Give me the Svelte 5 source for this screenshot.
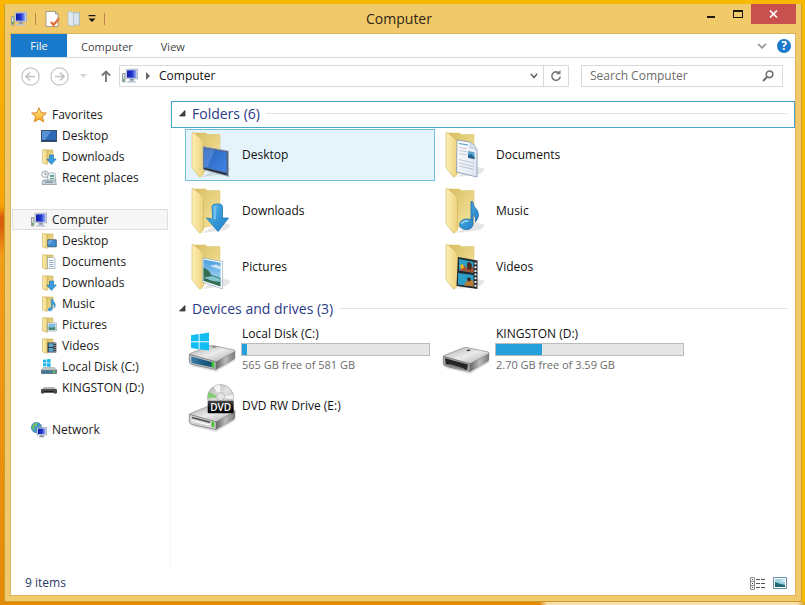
<script>
  const favorites = [
    { name: 'Desktop', icon: 'screen' },
    { name: 'Downloads', icon: 'downloads' },
    { name: 'Recent places', icon: 'recent' }
  ];
  const places = [
    { name: 'Desktop', icon: 'desktop' },
    { name: 'Documents', icon: 'documents' },
    { name: 'Downloads', icon: 'downloads' },
    { name: 'Music', icon: 'music' },
    { name: 'Pictures', icon: 'pictures' },
    { name: 'Videos', icon: 'videos' },
    { name: 'Local Disk (C:)', icon: 'system' },
    { name: 'KINGSTON (D:)', icon: 'usb' }
  ];
  const folders = [
    { name: 'Desktop', icon: 'desktop' },
    { name: 'Documents', icon: 'documents' },
    { name: 'Downloads', icon: 'downloads' },
    { name: 'Music', icon: 'music' },
    { name: 'Pictures', icon: 'pictures' },
    { name: 'Videos', icon: 'videos' }
  ];
  const drives = [
    { name: 'Local Disk (C:)', icon: 'system', free: '565', total: '581' },
    { name: 'KINGSTON (D:)', icon: 'usb', free: '2.70', total: '3.59' },
    { name: 'DVD RW Drive (E:)', icon: 'dvd' }
  ];
  let selected = $state('Desktop');
  let query = $state('');
  const used = (d) => Math.round((1 - Number(d.free) / Number(d.total)) * 1000) / 10;
</script>

{#snippet computerIcon()}
  <svg class="i16" viewBox="0 0 16 16" aria-hidden="true">
    <path d="M0.5 5.5h2.4v8.5H0.5z" fill="#d5dcda" stroke="#77817f" stroke-width=".7" />
    <path d="M1 11h1.5v2H1z" fill="#54a556" />
    <path d="M4 1.5 15.5 1v10L4 10.5z" fill="#dfe4ee" stroke="#8d98ac" stroke-width=".6" />
    <path d="M5 2.5 14.5 2v8L5 9.5z" fill="url(#blueScreen)" />
    <path d="M8 10.8h3.5l.6 2H7.5z" fill="#8795ad" />
    <path d="M5.5 13h8l1 1.4H4.8z" fill="#bac3d2" />
  </svg>
{/snippet}

{#snippet smallIcon(kind)}
  <svg class="i16" viewBox="0 0 16 16" aria-hidden="true">
    {#if kind === 'screen'}
      <rect x=".5" y="2.5" width="15" height="11" fill="#2f69b8" stroke="#39506f" />
      <path d="M1 3h9L4 12H1z" fill="#6aa3df" opacity=".7" />
      <path d="M1 12h14v1H1z" fill="#253e63" />
    {:else if kind === 'recent'}
      <path d="M7 3h7l1 8H6z" fill="#e9f1f3" stroke="#92a4ac" stroke-width=".7" />
      <path d="M9 5h4v2H9zM9 8h4.5v1H9z" fill="#5fa48e" />
      <path d="M2 10h12l1.5 4.5H1z" fill="#c8d2d8" stroke="#7c8b94" stroke-width=".7" />
      <path d="M4 12h8" stroke="#5f7884" />
      <circle cx="4" cy="4.2" r="3.3" fill="#f2f4f6" stroke="#8e999f" stroke-width=".8" />
      <path d="M4 2.3v2h1.8" fill="none" stroke="#55626a" stroke-width=".7" />
    {:else if kind === 'system'}
      <path d="M2 .8 5.3.4v3.2H2zM5.9.3 9.6 0v3.6H5.9zM2 4.2h3.3v3.2L2 7zM5.9 4.2h3.7v3.7l-3.7-.5z" fill="#1fb6ea" />
      <path d="M2.5 8.5h11L16 11H0z" fill="#c4cacd" stroke="#92999d" stroke-width=".5" />
      <path d="M0 11h16v3.2q0 .8-1 .8H1q-1 0-1-.8z" fill="#6d7b83" />
      <path d="M1.5 12h9v2h-9z" fill="#347c9f" />
      <path d="M12 12h2v2h-2z" fill="#4ed05a" />
    {:else if kind === 'usb'}
      <path d="M3 7h10l3 3H0z" fill="#b5b5b5" />
      <path d="M0 10q0-1 1-1h14q1 0 1 1v3l-2 1-1.500-1.500h-9L2 14l-2-1z" fill="#4a4a4a" />
      <path d="M3 11h10v1.500H3z" fill="#1f1f1f" />
    {:else}
      <path d="M5 1h7v12H5z" fill="url(#folderBack)" stroke="#c9ad56" stroke-width=".6" />
      <path d="M1.500 .8H5l1.200 1.700v12.900L1.500 13.800z" fill="url(#folderFront)" stroke="#c8a94f" stroke-width=".6" />
      {#if kind === 'desktop'}
        <path d="M6.800 6.800h8.500v7H6.800z" fill="#3f8ad0" stroke="#37506e" stroke-width=".8" />
        <path d="M7.200 7.200h5l-5 5z" fill="#86bdeb" opacity=".7" />
      {:else if kind === 'documents'}
        <path d="M6.500 3.500h6l1.500 1.700V14.500H6.500z" fill="#fafcff" stroke="#8fa2b5" stroke-width=".7" />
        <path d="M8 6.500h4.500M8 8.500h4.500M8 10.500h4.500M8 12.500h4.500" stroke="#7f9ec0" stroke-width=".8" />
      {:else if kind === 'downloads'}
        <path d="M8.500 6h4v4h2.700l-4.700 5.500L5.800 10h2.700z" fill="#3d9ddd" stroke="#1d6faf" stroke-width=".6" />
      {:else if kind === 'music'}
        <path d="M10.200 3h1.200q.4 2.200 2.300 3.800 1.600 2.200-.2 5.200.3-3.300-2.100-4.300v5.100q-.4 2.200-2.900 2.300-2-.4-1.300-2.200 1-1.700 3-1.100z" fill="#3d9ddd" stroke="#1c70b2" stroke-width=".4" />
      {:else if kind === 'pictures'}
        <path d="M6.500 6h8.800v8H6.500z" fill="#fff" stroke="#8293a2" stroke-width=".7" />
        <path d="M7.500 7h6.800v3.500H7.500z" fill="#77bae5" />
        <path d="m7.500 10 3 .6 3.800-.6v3H7.500z" fill="#438570" />
      {:else if kind === 'videos'}
        <path d="M6.500 4.500h8.800v10H6.500z" fill="#303942" />
        <path d="M7.700 5.300h4.800v3.800H7.700zM7.700 10h4.800v3.700H7.700z" fill="#5aa6c8" />
        <path d="M14 5v9" stroke="#e5e8ea" stroke-dasharray="1 1" />
      {/if}
    {/if}
  </svg>
{/snippet}

{#snippet driveBody(front)}
  <path d="M4 40 29 46 49 34 46 32z" fill="#000" opacity=".12" />
  <path d="M2.500 28.500Q3 27.200 5 26.700L22 20q2-.8 4-.4l20.500 4.200q2 .5 1.500 2L29 36z" fill="url(#driveTop)" stroke="#8c8c8c" stroke-width=".7" />
  <path d="M29 36 48 25.500v6q0 1.200-1.500 2L29 43.500z" fill="url(#driveSide)" stroke="#777" stroke-width=".4" />
  <path d="M2.300 28.300 29 35.800v7.700L5 38.500q-2.700-.8-2.700-3z" fill={front} stroke="#6f6f6f" stroke-width=".7" />
{/snippet}

{#snippet largeIcon(kind)}
  <svg class="i48" viewBox="0 0 48 48" aria-hidden="true">
    {#if kind === 'system'}
      {@render driveBody('#b9bfc2')}
      <path d="M4.300 30.600 26.500 36.600v5L6 37.300q-1.700-.6-1.700-2z" fill="url(#driveBlue)" />
      <path d="M24.500 35.800 27.300 36.600v5L24.500 41z" fill="#35c52c" />
      <path d="m24 21 4-1.200 3 .8-4 1.400z" fill="#8b8b8b" />
      <path d="m4 9.200 7.700-1.100v7.200H4zM12.600 8 22 6.600v8.700h-9.400zM4 16.200h7.700v7L4 22.100zM12.600 16.200H22v8.400l-9.400-1.300z" fill="#12bdf2" />
    {:else if kind === 'usb'}
      <g transform="translate(0 2)">
        {@render driveBody('#a5a5a5')}
        <path d="M4 30.200 27 36.500 26 42 20 40.300 9.500 36.500 4.800 36.500z" fill="#252525" />
        <path d="m10 36.500 12 3.500 3 2-18.500-4.200z" fill="#777" />
        <path d="m25 22.500 2.500-1 2.500.6-2.500 1.200z" fill="#333" />
      </g>
    {:else if kind === 'dvd'}
      <g transform="translate(0 4)">
        {@render driveBody('#d4d4d4')}
        <path d="m5 31.500 18 4.700" stroke="#4b4b4b" stroke-width="1.500" />
        <path d="m5 34.500 18 4.600" stroke="#fff" stroke-width="1.200" />
        <path d="M24.500 35.500 27.300 36.300v5L24.500 40.600z" fill="#45c52f" />
      </g>
      <circle cx="33.500" cy="15.500" r="13" fill="url(#disc)" stroke="#969696" stroke-width=".6" />
      <path d="M33.500 15.500 22 10q-1.500 3-1.200 6z" fill="#6fd05d" opacity=".8" />
      <path d="m33.500 15.500-7-10.800q3-2 6.500-2z" fill="#fff" opacity=".8" />
      <path d="m33.500 15.500 12.500-3q.7 2.500.3 5z" fill="#fff" opacity=".7" />
      <circle cx="33.500" cy="14.500" r="4" fill="#eee" stroke="#b5b5b5" />
      <circle cx="33.500" cy="14.500" r="1.700" fill="#fff" stroke="#aaa" stroke-width=".6" />
      <rect x="20.700" y="18.700" width="26" height="12.500" rx="1" fill="url(#dvdLabel)" />
      <text x="33.700" y="28.500" text-anchor="middle" class="disc-text">DVD</text>
    {:else}
      <path d="m15 46 24-3 5-5-10-3z" fill="#000" opacity=".1" />
      <path d="M5.500 2h13l2 1.500H33V37L15 41z" fill="url(#folderBack)" stroke="#dcc36e" stroke-width=".5" />
      <path d="M5 2q1-.8 2 0l8 6.500q1.500 1 1.500 3V43l-3 3q-.7.300-1.300-.2L5.700 37.500Q5 37 5 36z" fill="url(#folderFront)" stroke="#d0b25a" stroke-width=".6" />
      {#if kind === 'desktop'}
        <path d="M16 15.500 41.500 20v25.500L16 38.500z" fill="#50617c" stroke="#aab5c4" stroke-width=".8" />
        <path d="M17 17 39.500 21v20.500L17 36z" fill="url(#blueDesk)" />
        <path d="M17 17 28 19 20 36.700 17 36z" fill="#8dbbf4" opacity=".3" />
        <path d="m17 37 22.500 5.600v1.200L17 38z" fill="#17212f" />
      {:else if kind === 'documents'}
        <path d="m16 9 13 2q5 2.500 7 8v27l-20.500-5z" fill="url(#paper)" stroke="#7d93b3" stroke-width=".8" />
        <path d="M29 11q1.500 4-.5 6 4-.5 7.500 2" fill="#d6e3f2" stroke="#9fb3cd" stroke-width=".6" />
        <path d="m18 12.500 9 1.500" stroke="#519bca" stroke-width="1.200" />
        <path d="m18 16.500 8 1.300m-8 1.700 8 1.300m-8 1.700 8 1.300m-8 4.700 15 3.500m-15 0 15 3.500m-15-.5 15 3.500" stroke="#b3bccb" stroke-width=".8" />
        <path d="m27 20 6.500 1.200v7L27 26.800z" fill="#5ba3cf" />
        <path d="m27 24 3-1 3.500 3v2.200L27 26.800z" fill="#29648f" />
      {:else if kind === 'downloads'}
        <path d="M25 19.500q.5-2.500 4-2.500h3q3.500 0 3.500 3V31h6L31 44.500 19.500 31 25.700 32z" fill="url(#blueArrow)" stroke="#1d78ba" stroke-width=".8" />
        <path d="M26.500 20q.5-1.500 3-1.500l-.5 14-5.500-.5 3-.5z" fill="#8fd2f5" opacity=".6" />
      {:else if kind === 'music'}
        <path d="M30 14.500h1.500Q32.500 20 36 23q3.500 5.500-1.500 12 .5-6-2.500-8v10q-.5 5.500-7 5.500-6-.5-6.500-5 1-5.500 8-5.500 2 0 3.500.8z" fill="url(#blueArrow)" stroke="#206ca7" stroke-width=".8" />
        <path d="M20.500 37q2-3.500 7-3" stroke="#b4e1f8" stroke-width="1.200" fill="none" />
      {:else if kind === 'pictures'}
        <path d="M16 15 35.500 18.500V46L15.500 39z" fill="#fff" stroke="#93acc3" stroke-width=".7" />
        <path d="m16.500 16.500 17 3.200v23.800l-17-5.800z" fill="url(#sky)" />
        <path d="m16.500 24.500 5 3 3 4.500 9 3v8.500l-17-5.800z" fill="#356f51" />
        <path d="m16.500 34.500 9-1.500 8 3v3l-8-1z" fill="#7fc4cf" />
        <path d="m23 23 6-1.500 4.500 2v3z" fill="#e6f4fc" opacity=".8" />
      {:else if kind === 'videos'}
        <path d="M17 14 36.500 17.500V46L15.500 43z" fill="#24292f" />
        <path d="m18 16 14.500 2.800v11L18 27.500zM17 30l15.500 2v11.500L17 41.500z" fill="#2b9fc8" />
        <path d="m19 26 4-4 3 4 3-4 3.500 3v4.800L19 27.500z" fill="#a94f2c" />
        <path d="m26 20 3-1 2 3-1 5-4-1z" fill="#4b2e24" />
        <path d="m19 22 3-1 1 4-3 1z" fill="#eab62e" />
        <path d="m25 39 3-3 4.500 2v5.500L23 42.300z" fill="#b97930" />
        <path d="m26 35 3-.5 1 3-3 1z" fill="#30251f" />
        <path d="M34.500 19.500V45" stroke="#f0f0ee" stroke-width="2" stroke-dasharray="2 1.700" />
      {/if}
    {/if}
  </svg>
{/snippet}

<svg class="defs" aria-hidden="true">
  <defs>
    <linearGradient id="blueScreen"><stop offset="0" stop-color="#0d1ca6" /><stop offset=".55" stop-color="#2438d0" /><stop offset="1" stop-color="#a2b6f4" /></linearGradient>
    <linearGradient id="blueDesk" x1="0" y1="0" x2="1" y2="1"><stop offset="0" stop-color="#295fb4" /><stop offset="1" stop-color="#3f87ea" /></linearGradient>
    <linearGradient id="folderFront"><stop offset="0" stop-color="#fdf0b4" /><stop offset="1" stop-color="#ecd27c" /></linearGradient>
    <linearGradient id="folderBack" x1="0" y1="0" x2="1" y2="1"><stop offset="0" stop-color="#d8bd60" /><stop offset="1" stop-color="#f7e7a1" /></linearGradient>
    <linearGradient id="paper" x1="0" y1="0" x2="1" y2="1"><stop offset="0" stop-color="#fff" /><stop offset="1" stop-color="#dde3ef" /></linearGradient>
    <linearGradient id="sky" x1="0" y1="0" x2="0" y2="1"><stop offset="0" stop-color="#4a9fe0" /><stop offset="1" stop-color="#b9e2f5" /></linearGradient>
    <linearGradient id="blueArrow" x1="0" y1="0" x2="1" y2="1"><stop offset="0" stop-color="#55b7ec" /><stop offset="1" stop-color="#1b7bc4" /></linearGradient>
    <linearGradient id="driveTop" x1="0" y1="0" x2="1" y2="1"><stop offset="0" stop-color="#a9a9a9" /><stop offset=".5" stop-color="#ebebeb" /><stop offset="1" stop-color="#a6a6a6" /></linearGradient>
    <linearGradient id="driveSide"><stop offset="0" stop-color="#666" /><stop offset=".5" stop-color="#bababa" /><stop offset="1" stop-color="#7b7b7b" /></linearGradient>
    <linearGradient id="driveBlue"><stop offset="0" stop-color="#3b7ea4" /><stop offset=".5" stop-color="#1d5f8a" /><stop offset="1" stop-color="#174a66" /></linearGradient>
    <linearGradient id="disc" x1="0" y1="0" x2="1" y2="1"><stop offset="0" stop-color="#b4b4b4" /><stop offset=".5" stop-color="#e3e3e3" /><stop offset="1" stop-color="#a0a0a0" /></linearGradient>
    <linearGradient id="dvdLabel" x1="0" y1="0" x2="0" y2="1"><stop offset="0" stop-color="#4a4a4a" /><stop offset=".5" stop-color="#161616" /><stop offset="1" stop-color="#000" /></linearGradient>
    <linearGradient id="gold" x1="0" y1="0" x2="0" y2="1"><stop offset="0" stop-color="#fff08a" /><stop offset="1" stop-color="#f5a51d" /></linearGradient>
  </defs>
</svg>

<div class="wallpaper">
  <div class="window">
    <header class="titlebar">
      <div class="quick">
        {@render computerIcon()}
        <span class="rule"></span>
        <button aria-label="Properties">
          <svg class="i16" viewBox="0 0 16 16">
            <path d="M2 .5h9.500L14 3v12.500H2z" fill="#fff" stroke="#8f8a80" stroke-width=".8" />
            <path d="M11.500.5V3H14" fill="none" stroke="#8f8a80" stroke-width=".8" />
            <path d="m7 11 2.500 3L15 7.500" fill="none" stroke="#e36e3a" stroke-width="2.400" />
          </svg>
        </button>
        <button aria-label="New folder">
          <svg class="i16" viewBox="0 0 16 16">
            <path d="M5 1.500h8.500v12.500H5z" fill="#c5d5df" stroke="#9db0bc" stroke-width=".6" />
            <path d="M2 .8h4L7.500 2.500v13L2 14z" fill="#dfe9f0" stroke="#a5b9c6" stroke-width=".6" />
            <path d="M8 3h4.500v10.500H8z" fill="#dce8ef" opacity=".8" />
          </svg>
        </button>
        <button aria-label="Customize Quick Access Toolbar" class="narrow">
          <svg width="8" height="8" viewBox="0 0 8 8"><path d="M.5 0h7v1.300h-7zM.500 3.500h7L4 7z" fill="#161616" /></svg>
        </button>
        <span class="rule"></span>
      </div>
      <h1>Computer</h1>
      <div class="caption">
        <button aria-label="Minimize"><svg width="8" height="10" viewBox="0 0 8 10"><path d="M0 7h8v2H0z" fill="#1d1a10" /></svg></button>
        <button aria-label="Maximize"><svg width="10" height="8" viewBox="0 0 10 8"><path d="M0 0h10v8H0zM1 2v5h8V2z" fill="#1d1a10" fill-rule="evenodd" /></svg></button>
        <button aria-label="Close" class="close"><svg width="9" height="8" viewBox="0 0 9 8"><path d="m1 .5 7 7m0-7-7 7" stroke="#fff" stroke-width="1.700" /></svg></button>
      </div>
    </header>

    <div class="client">
      <div class="ribbon">
        <button class="file">File</button>
        <button class="tab">Computer</button>
        <button class="tab">View</button>
        <button class="expand" aria-label="Expand the Ribbon"><svg width="10" height="6" viewBox="0 0 10 6"><path d="m1 .8 4 4 4-4" fill="none" stroke="#9a9a9a" stroke-width="1.800" /></svg></button>
        <button class="help" aria-label="Help">?</button>
      </div>

      <div class="toolbar">
        <button aria-label="Back"><svg width="19" height="19" viewBox="0 0 19 19" fill="none" stroke="#c3c3c3"><circle cx="9.500" cy="9.500" r="8.700" stroke-width="1.200" /><path d="M14 9.500H5.500M9 5.500l-4 4 4 4" stroke-width="1.700" /></svg></button>
        <button aria-label="Forward"><svg width="19" height="19" viewBox="0 0 19 19" fill="none" stroke="#c3c3c3"><circle cx="9.500" cy="9.500" r="8.700" stroke-width="1.200" /><path d="M5 9.500h8.500M10 5.500l4 4-4 4" stroke-width="1.700" /></svg></button>
        <button aria-label="Recent locations" class="hist"><svg width="7" height="4" viewBox="0 0 7 4"><path d="M0 0h7L3.500 4z" fill="#d3d3d3" /></svg></button>
        <button aria-label="Up" class="up"><svg width="10" height="12" viewBox="0 0 10 12"><path d="M5 12V1.500M1 5.500l4-4 4 4" fill="none" stroke="#757575" stroke-width="1.800" /></svg></button>
        <div class="address">
          {@render computerIcon()}
          <svg width="4" height="8" viewBox="0 0 4 8" class="crumb"><path d="M0 0v8l4-4z" fill="#666" /></svg>
          <a href="#computer">Computer</a>
          <button aria-label="Previous locations"><svg width="8" height="6" viewBox="0 0 8 6"><path d="m.8.800 3.200 3.700L7.200.8" fill="none" stroke="#666" stroke-width="1.600" /></svg></button>
          <button aria-label="Refresh" class="refresh"><svg width="12" height="12" viewBox="0 0 12 12"><path d="M9.300 3.500A4.200 4.200 0 1 0 10.200 6.500" fill="none" stroke="#777" stroke-width="1.600" /><path d="M6 4.200h4.500V0z" fill="#777" /></svg></button>
        </div>
        <label class="search">
          <input type="text" placeholder="Search Computer" aria-label="Search Computer" bind:value={query} />
          <svg width="12" height="12" viewBox="0 0 12 12"><circle cx="7.500" cy="4.300" r="3.300" fill="none" stroke="#707070" stroke-width="1.600" /><path d="M5.200 6.800 1 11" stroke="#707070" stroke-width="2" /></svg>
        </label>
      </div>

      <div class="body">
        <nav>
          <a class="root" href="#favorites">
            <svg class="i16" viewBox="0 0 16 16" aria-hidden="true"><path d="m8 .8 2.100 4.900 5.300.4-4.100 3.500 1.400 5.300L8 12l-4.700 2.900 1.400-5.300L.6 6.100l5.300-.4z" fill="url(#gold)" stroke="#d27a20" stroke-width=".9" /></svg>
            Favorites
          </a>
          {#each favorites as f}
            <a class="leaf" href="#{f.icon}">{@render smallIcon(f.icon)}{f.name}</a>
          {/each}
          <a class="root current" href="#computer">{@render computerIcon()}Computer</a>
          {#each places as p}
            <a class="leaf" href="#{p.icon}">{@render smallIcon(p.icon)}{p.name}</a>
          {/each}
          <a class="root spaced" href="#network">
            <svg class="i16" viewBox="0 0 16 16" aria-hidden="true">
              <circle cx="5.500" cy="5.500" r="5.200" fill="#3d95cf" stroke="#276b9d" stroke-width=".5" />
              <path d="M2 2.500Q5 0 7 1L5.500 4 3 5l1 3-1.500.5Q0 6 2 2.500zM7 5l3-1-.5 4-2 1z" fill="#6fc069" />
              <path d="M6 5.500h9.500v7.500H6z" fill="#dbe3ee" stroke="#7f8fa5" stroke-width=".6" />
              <path d="M7 6.500h7.500v5.500H7z" fill="url(#blueScreen)" />
              <path d="M9.500 13h2.500l1.500 2.300H8z" fill="#8896ac" />
            </svg>
            Network
          </a>
        </nav>

        <main>
          <section>
            <h2 class="focused"><svg width="7" height="7" viewBox="0 0 7 7"><path d="M6 .5V6H.5z" fill="#444" stroke="#222" stroke-width=".7" /></svg>Folders (6)</h2>
            <div class="tiles">
              {#each folders as f}
                <button class="tile" class:selected={selected === f.name} onclick={() => (selected = f.name)}>
                  {@render largeIcon(f.icon)}
                  <span class="info">{f.name}</span>
                </button>
              {/each}
            </div>
          </section>
          <section>
            <h2><svg width="7" height="7" viewBox="0 0 7 7"><path d="M6 .5V6H.5z" fill="#444" stroke="#222" stroke-width=".7" /></svg>Devices and drives (3)</h2>
            <div class="tiles">
              {#each drives as d}
                <button class="tile" class:selected={selected === d.name} onclick={() => (selected = d.name)}>
                  {@render largeIcon(d.icon)}
                  <span class="info">
                    <span>{d.name}</span>
                    {#if d.free}
                      <span class="bar"><span class="fill" style="width: {used(d)}%"></span></span>
                      <span class="free">{d.free} GB free of {d.total} GB</span>
                    {/if}
                  </span>
                </button>
              {/each}
            </div>
          </section>
        </main>
      </div>

      <footer>
        <span>9 items</span>
        <div class="views">
          <button aria-label="Details view">
            <svg width="15" height="13" viewBox="0 0 15 13"><path d="M.5.5h4v12h-4zM.5 4.500h4M.5 8.500h4" fill="#fff" stroke="#8b8b8b" /><path d="M2 2h1v1H2zM2 6h1v1H2zM2 10h1v1H2z" fill="#333" /><path d="M6 2.500h9M6 6.500h9M6 10.500h9" stroke="#555" stroke-dasharray="4 1" /></svg>
          </button>
          <button aria-label="Large icons view">
            <svg width="14" height="12" viewBox="0 0 14 12"><path d="M.5.5h13v11H.5z" fill="#fff" stroke="#6d8ca6" /><path d="M2 2h10v8H2z" fill="#9ed3e4" /><path d="m2 5 4 1.500L12 8v2H2z" fill="#1f6876" /><path d="M7 3h5v2.500z" fill="#e4f5fa" /></svg>
          </button>
        </div>
      </footer>
    </div>
  </div>
</div>

<style>
  :global(body) { margin: 0; }
  .defs { position: absolute; width: 0; height: 0; }
  .wallpaper {
    box-sizing: border-box;
    min-height: 100vh;
    padding: 4px 3px 3px 4px;
    display: flex;
    background:
      linear-gradient(90deg, #e48a07 0 67%, #f8dfae 68% 99%, #d8a01a) bottom / 100% 3px no-repeat,
      linear-gradient(#f9b500, #f7a504 34%, #d65a0c 36%, #dc680c 38%, #f29d18 42%, #e48a07) left / 4px 100% no-repeat,
      #f8ba00;
    font-family: "Open Sans", "Noto Sans", sans-serif;
    font-size: 12px;
    line-height: 16px;
    color: #1a1a1a;
  }
  .window {
    flex: 1;
    display: flex;
    flex-direction: column;
    box-sizing: border-box;
    border: 1px solid #cd9a2c;
    border-top: 0;
    padding: 0 6px 6px;
    background: #f0c96a;
  }
  button, input { font: inherit; color: inherit; border: 0; padding: 0; background: none; }
  button { display: inline-flex; align-items: center; justify-content: center; }
  a { color: inherit; text-decoration: none; }
  svg { flex: none; display: block; }
  .i16 { width: 16px; height: 16px; }
  .i48 { width: 48px; height: 48px; overflow: visible; }
  .disc-text { font: 600 10px "Open Sans", sans-serif; fill: #fff; }

  .titlebar { display: grid; grid-template-columns: 1fr auto 1fr; height: 30px; }
  .quick { display: flex; align-items: center; gap: 6px; }
  .quick .rule { width: 1px; height: 12px; background: #bf8351; margin: 0 2px; }
  .quick .narrow { width: 8px; }
  h1 { margin: 0 8px 0 0; font-size: 14px; font-weight: 400; line-height: 30px; color: #2d2615; }
  .caption { display: flex; justify-content: flex-end; align-items: flex-start; margin-right: -1px; }
  .caption button { width: 27px; height: 20px; }
  .caption .close { width: 45px; background: #c8504f; }

  .client { flex: 1; display: flex; flex-direction: column; background: #fff; box-shadow: 0 0 0 1px #dcb35c; }
  .ribbon { display: flex; align-items: stretch; height: 23px; border-bottom: 1px solid #dadbdc; color: #444; font-size: 11px; }
  .file { width: 56px; background: #1979ca; color: #fff; }
  .tab { padding: 2px 14px 0; }
  .expand { width: 20px; margin-left: auto; }
  .help {
    align-self: center;
    width: 14px;
    height: 14px;
    margin: 0 4px 0 5px;
    border-radius: 50%;
    background: #1979ca;
    color: #fff;
    font-size: 12px;
    font-weight: 700;
  }

  .toolbar { display: flex; align-items: center; height: 36px; padding: 0 12px 0 10px; }
  .toolbar > button + button { margin-left: 10px; }
  .toolbar > .hist { width: 8px; }
  .toolbar > .hist + .up { margin: 0 8px 0 14px; }
  .address { flex: 1; display: flex; align-items: stretch; height: 20px; border: 1px solid #d9d9d9; }
  .address > svg { align-self: center; margin-left: 2px; }
  .address .crumb { margin: 0 9px 0 8px; }
  .address a { align-self: center; flex: 1; color: #111; }
  .address button { width: 18px; }
  .address .refresh { width: 25px; border-left: 1px solid #d9d9d9; }
  .search { display: flex; align-items: center; box-sizing: border-box; width: 202px; height: 22px; margin-left: 12px; padding: 0 8px; border: 1px solid #d9d9d9; }
  .search input { flex: 1; min-width: 0; outline: none; }
  .search input::placeholder { color: #6d6d6d; opacity: 1; }

  .body { flex: 1; display: flex; }
  nav { width: 156px; padding: 10px 2px 0 1px; border-right: 1px solid #f6f6f6; }
  nav a { display: flex; align-items: center; gap: 5px; box-sizing: border-box; height: 21px; border: 1px solid transparent; }
  nav .root { padding-left: 18px; }
  nav .leaf { padding-left: 28px; }
  nav .current { margin-top: 21px; border-color: #dedede; background: #f6f6f6; }
  nav .spaced { margin-top: 21px; }

  main { flex: 1; padding-top: 7px; }
  section + section { margin-top: 3px; }
  h2 {
    display: flex;
    align-items: center;
    gap: 6px;
    box-sizing: border-box;
    height: 27px;
    margin: 0;
    padding: 0 7px 2px;
    border: 1px solid transparent;
    font-size: 14px;
    font-weight: 400;
    color: #2a3a86;
  }
  h2::after { content: ""; flex: 1; height: 1px; background: #e3e6e8; }
  h2.focused { border-color: #4aa3c9; }
  .tiles { display: grid; grid-template-columns: repeat(auto-fill, 250px); gap: 4px; padding: 1px 0 0 14px; }
  .tile { box-sizing: border-box; height: 52px; padding: 0 4px 0 1px; border: 1px solid transparent; justify-content: flex-start; gap: 6px; text-align: left; }
  .tile.selected { border-color: #70c0e0; background: #e5f3fb; }
  .info { flex: 1; display: flex; flex-direction: column; padding-left: 1px; color: #111; }
  .bar { display: block; box-sizing: border-box; height: 13px; margin: 1px 0 1px -1px; border: 1px solid #bcbcbc; background: #e6e6e6; }
  .fill { display: block; height: 100%; background: #26a0da; }
  .free { padding-bottom: 1px; font-size: 11px; color: #6d6d6d; }

  footer { display: flex; align-items: center; justify-content: space-between; height: 24px; padding: 0 8px 0 14px; color: #2c3a66; }
  .views { display: flex; gap: 8px; }
</style>
